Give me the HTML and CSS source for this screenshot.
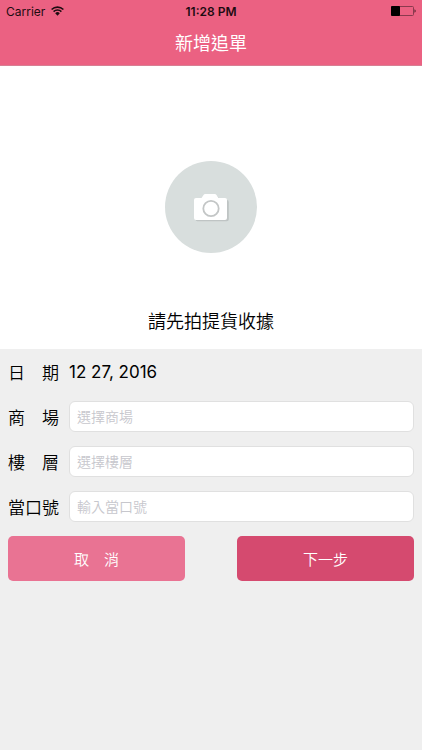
FILE: index.html
```html
<!DOCTYPE html>
<html lang="zh-Hant">
<head>
<meta charset="utf-8">
<meta name="viewport" content="width=device-width, initial-scale=1">
<title>新增追單</title>
<link rel="stylesheet" href="styles.css">
</head>
<body>
<header class="header">
  <div class="status">
    <div class="carrier">
      <span>Carrier</span>
      <svg class="wifi" viewBox="0 0 13 10" width="13" height="10" aria-hidden="true">
        <path d="M.6 3.500a8.500 8.500 0 0 1 11.800 0M2.600 5.600a5.600 5.600 0 0 1 7.800 0" fill="none" stroke="#1d0c11" stroke-width="1.600"/>
        <path d="M4.200 7.300a3.200 3.200 0 0 1 4.600 0L6.500 9.700z" fill="#1d0c11"/>
      </svg>
    </div>
    <time class="clock">11:28 PM</time>
    <div class="power">
      <svg viewBox="0 0 25 10" width="25" height="10" aria-hidden="true">
        <rect x=".5" y=".5" width="22" height="9" rx="1" fill="none" stroke="#8a3a4e"/>
        <rect x="0" y="0" width="9" height="10" rx="1" fill="#000"/>
        <path d="M23.500 3.200q1.200.5 1.200 1.800t-1.200 1.800z" fill="#4a1d29"/>
      </svg>
    </div>
  </div>
  <h1 class="title">新增追單</h1>
</header>
<main>
  <section class="photo">
    <button class="camera" type="button" aria-label="請先拍提貨收據">
      <svg viewBox="0 0 38 30" width="38" height="30" aria-hidden="true">
        <path d="M5.500 8H11l2-3q.7-1 1.700-1h9.600q1 0 1.700 1l2 3h6.800q2 0 2 2v17.300q0 2-2 2H5.500q-2 0-2-2V10q0-2 2-2z" fill="#bfc4c4"/>
        <path d="M4 6h5.500l2-3q.7-1 1.700-1h9.600q1 0 1.700 1l2 3H33q2 0 2 2v18q0 2-2 2H4q-2 0-2-2V8q0-2 2-2z" fill="#fff"/>
        <circle cx="19" cy="16.500" r="7.700" fill="#fff" stroke="#c3c6c6" stroke-width="1.800"/>
      </svg>
    </button>
    <p class="prompt">請先拍提貨收據</p>
  </section>
  <form class="form">
    <div class="row">
      <span class="label">日　期</span>
      <span class="date">12 27, 2016</span>
    </div>
    <div class="row">
      <label class="label" for="mall">商　場</label>
      <input class="field" id="mall" type="text" placeholder="選擇商場">
    </div>
    <div class="row">
      <label class="label" for="floor">樓　層</label>
      <input class="field" id="floor" type="text" placeholder="選擇樓層">
    </div>
    <div class="row">
      <label class="label" for="stall">當口號</label>
      <input class="field" id="stall" type="text" placeholder="輸入當口號">
    </div>
    <div class="actions">
      <button class="action cancel" type="button">取　消</button>
      <button class="action next" type="submit">下一步</button>
    </div>
  </form>
</main>
</body>
</html>
```
FILE: styles.css
```css
* {
  box-sizing: border-box;
}

body {
  margin: 0;
  min-height: 100vh;
  background: #efefef;
  color: #000;
  font-family: Inter, "Noto Sans CJK TC", sans-serif;
}

button,
input {
  font-family: inherit;
}

.header {
  background: #eb6182;
  border-bottom: 1px solid #d77f93;
}

.status {
  display: grid;
  grid-template-columns: 1fr auto 1fr;
  align-items: center;
  height: 22px;
  padding: 0 6px;
  font-size: 12px;
  color: #1d0c11;
}

.carrier {
  display: flex;
  align-items: center;
  gap: 6px;
}

.clock {
  font-weight: 600;
}

.power {
  display: flex;
  justify-content: flex-end;
}

.title {
  margin: 0;
  height: 43px;
  line-height: 43px;
  font-size: 18px;
  font-weight: 400;
  text-align: center;
  color: #fff;
}

.photo {
  display: flex;
  flex-direction: column;
  align-items: center;
  gap: 55px;
  padding: 95px 0 14px;
  background: #fff;
}

.camera {
  display: grid;
  place-items: center;
  width: 92px;
  height: 92px;
  padding: 0;
  border: 0;
  border-radius: 50%;
  background: #d8dedd;
}

.prompt {
  margin: 0;
  font-size: 18px;
  font-weight: 350;
  line-height: 27px;
}

.form {
  padding: 0 8px 8px;
}

.row {
  display: flex;
  align-items: center;
  gap: 9px;
  height: 45px;
}

.label {
  flex: none;
  width: 52px;
  font-size: 17px;
  font-weight: 350;
  white-space: nowrap;
}

.date {
  font-size: 17px;
}

.field {
  flex: 1;
  min-width: 0;
  height: 31px;
  padding: 0 7px;
  border: 1px solid #e0e0e0;
  border-radius: 6px;
  background: #fff;
  font-size: 14px;
  font-weight: 350;
}

.field::placeholder {
  color: #c7c7cd;
  opacity: 1;
}

.actions {
  display: grid;
  grid-template-columns: 1fr 1fr;
  gap: 52px;
  padding-top: 7px;
}

.action {
  height: 45px;
  padding: 0 0 1px;
  border: 0;
  border-radius: 5px;
  font-size: 15px;
  font-weight: 350;
  color: #fff;
}

.cancel {
  background: #e97393;
}

.next {
  background: #d54a6f;
}
```
